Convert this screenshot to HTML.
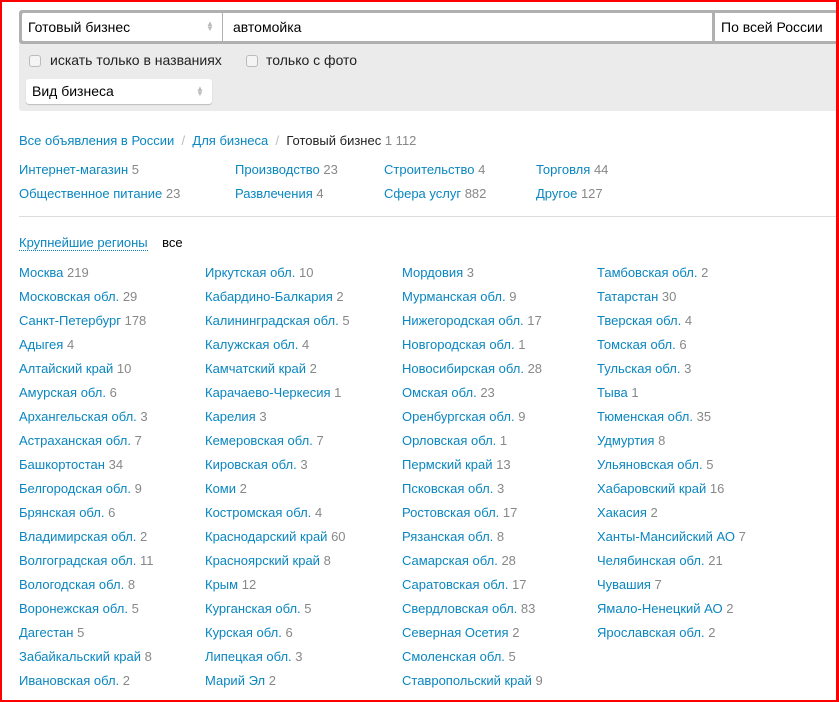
<!DOCTYPE html>
<html><head><meta charset="utf-8"><style>
*{margin:0;padding:0;box-sizing:border-box}
body{width:839px;height:702px;overflow:hidden;background:#fff;font-family:"Liberation Sans",Arial,sans-serif;font-size:13px;position:relative}
.frame{position:absolute;left:0;top:0;width:839px;height:702px;border:2px solid #f00;border-right-width:3px;z-index:10;pointer-events:none}
.panel{position:absolute;left:19px;top:10px;width:830px;height:101px;background:#ebebeb;border-radius:3px}
.bar{position:absolute;left:19px;top:10px;width:830px;height:34px;background:#b0b0b0;border-radius:3px}
.w{position:absolute;background:#fff;top:3px;height:28px;line-height:28px;font-size:14px;color:#000;padding-left:6px}
.arr{position:absolute;color:#bbb;font-size:8px;line-height:5px;text-align:center}
.cb{position:absolute;width:12px;height:12px;border:1px solid #bbb;border-radius:3px;background:#f4f4f4}
.t{position:absolute;font-size:14px;color:#222;white-space:nowrap}
a,.a{color:#0a86c0;text-decoration:none}
.c{color:#888}
.r{position:absolute;white-space:nowrap;line-height:16px}
</style></head><body>
<div class="frame"></div>
<div class="panel"></div>
<div class="bar">
 <div class="w" style="left:3px;width:200px;border-radius:2px 0 0 2px">Готовый бизнес</div>
 <div class="arr" style="left:187px;top:11px">▲<br>▼</div>
 <div class="w" style="left:204px;width:489px;padding-left:10px">автомойка</div>
 <div class="w" style="left:696px;width:140px;font-size:14px">По всей России</div>
</div>
<div class="cb" style="left:29px;top:55px"></div>
<div class="t" style="left:50px;top:52px">искать только в названиях</div>
<div class="cb" style="left:246px;top:55px"></div>
<div class="t" style="left:266px;top:52px">только с фото</div>
<div style="position:absolute;left:26px;top:79px;width:186px;height:25px;background:#fff;border-radius:3px;box-shadow:0 1px 1px #bbb;font-size:14px;line-height:24px;padding-left:6px">Вид бизнеса</div>
<div class="arr" style="left:196px;top:86px">▲<br>▼</div>

<div class="r" style="left:19px;top:133px"><a>Все объявления в России</a> <span style="color:#bbb">&nbsp;/&nbsp;</span> <a>Для бизнеса</a> <span style="color:#bbb">&nbsp;/&nbsp;</span> <span style="color:#222">Готовый бизнес</span> <span class="c">1 112</span></div>
<div class="r" style="left:19px;top:162px"><a>Интернет-магазин</a> <span class="c">5</span></div>
<div class="r" style="left:19px;top:186px"><a>Общественное питание</a> <span class="c">23</span></div>
<div class="r" style="left:235px;top:162px"><a>Производство</a> <span class="c">23</span></div>
<div class="r" style="left:235px;top:186px"><a>Развлечения</a> <span class="c">4</span></div>
<div class="r" style="left:384px;top:162px"><a>Строительство</a> <span class="c">4</span></div>
<div class="r" style="left:384px;top:186px"><a>Сфера услуг</a> <span class="c">882</span></div>
<div class="r" style="left:536px;top:162px"><a>Торговля</a> <span class="c">44</span></div>
<div class="r" style="left:536px;top:186px"><a>Другое</a> <span class="c">127</span></div>
<div style="position:absolute;left:19px;top:216px;width:820px;height:1px;background:#ddd"></div>
<div class="r" style="left:19px;top:235px;font-size:13px"><a style="border-bottom:1px dotted #0a86c0">Крупнейшие регионы</a> &nbsp;&nbsp;&nbsp;<span style="color:#000">все</span></div>
<div id="cols"></div>
<script>
var cols=[[19,["Москва 219","Московская обл. 29","Санкт-Петербург 178","Адыгея 4","Алтайский край 10","Амурская обл. 6","Архангельская обл. 3","Астраханская обл. 7","Башкортостан 34","Белгородская обл. 9","Брянская обл. 6","Владимирская обл. 2","Волгоградская обл. 11","Вологодская обл. 8","Воронежская обл. 5","Дагестан 5","Забайкальский край 8","Ивановская обл. 2"]],
[205,["Иркутская обл. 10","Кабардино-Балкария 2","Калининградская обл. 5","Калужская обл. 4","Камчатский край 2","Карачаево-Черкесия 1","Карелия 3","Кемеровская обл. 7","Кировская обл. 3","Коми 2","Костромская обл. 4","Краснодарский край 60","Красноярский край 8","Крым 12","Курганская обл. 5","Курская обл. 6","Липецкая обл. 3","Марий Эл 2"]],
[402,["Мордовия 3","Мурманская обл. 9","Нижегородская обл. 17","Новгородская обл. 1","Новосибирская обл. 28","Омская обл. 23","Оренбургская обл. 9","Орловская обл. 1","Пермский край 13","Псковская обл. 3","Ростовская обл. 17","Рязанская обл. 8","Самарская обл. 28","Саратовская обл. 17","Свердловская обл. 83","Северная Осетия 2","Смоленская обл. 5","Ставропольский край 9"]],
[597,["Тамбовская обл. 2","Татарстан 30","Тверская обл. 4","Томская обл. 6","Тульская обл. 3","Тыва 1","Тюменская обл. 35","Удмуртия 8","Ульяновская обл. 5","Хабаровский край 16","Хакасия 2","Ханты-Мансийский АО 7","Челябинская обл. 21","Чувашия 7","Ямало-Ненецкий АО 2","Ярославская обл. 2"]]];
var h="";cols.forEach(function(c){c[1].forEach(function(s,i){var k=s.lastIndexOf(" ");h+='<div class="r" style="left:'+c[0]+'px;top:'+(265+i*24)+'px"><a>'+s.slice(0,k)+'</a> <span class="c">'+s.slice(k+1)+'</span></div>';});});
document.getElementById("cols").innerHTML=h;
</script>
</body></html>
